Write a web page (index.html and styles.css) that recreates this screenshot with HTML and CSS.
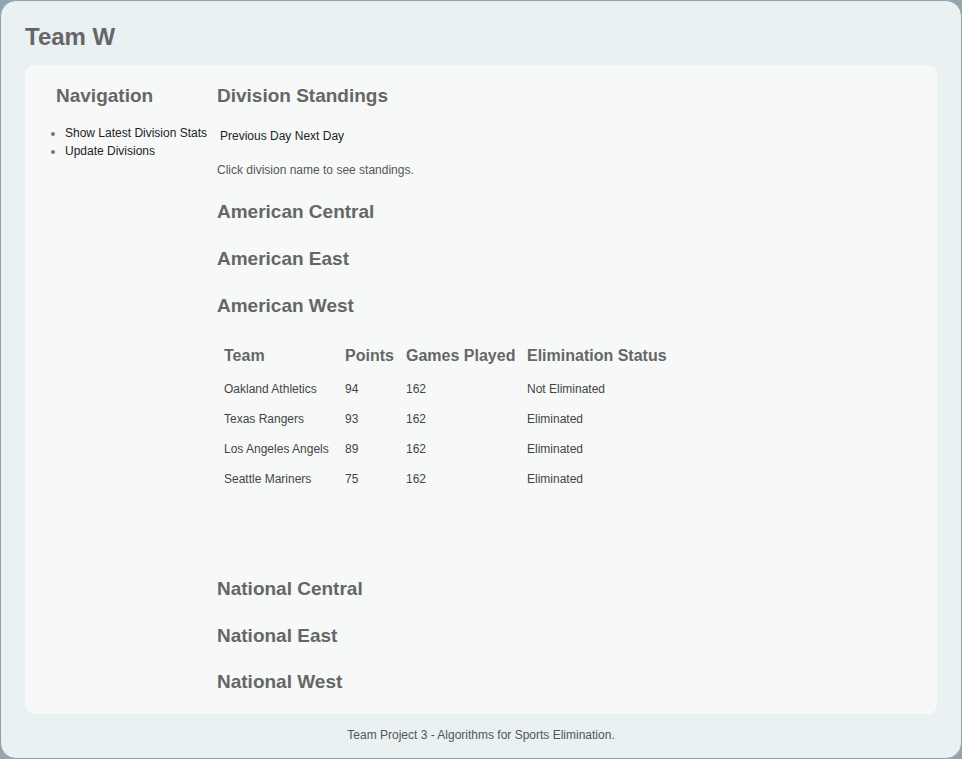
FILE: index.html
```html
<!DOCTYPE html>
<html>
<head>
<meta charset="utf-8">
<title>Team W</title>
<link rel="stylesheet" href="styles.css">
</head>
<body>
<div class="wrapper">
  <h1 class="site-title">Team W</h1>
  <div class="panel">
    <div class="nav">
      <h2 class="col-title nav-title">Navigation</h2>
      <ul class="nav-list">
        <li><a href="#">Show Latest Division Stats</a></li>
        <li><a href="#">Update Divisions</a></li>
      </ul>
    </div>
    <div class="main">
      <h2 class="col-title">Division Standings</h2>
      <div class="day-links"><a href="#">Previous Day</a> <a href="#">Next Day</a></div>
      <p class="hint">Click division name to see standings.</p>
      <h3 class="division">American Central</h3>
      <h3 class="division">American East</h3>
      <h3 class="division">American West</h3>
      <table class="standings">
        <thead>
          <tr><th class="c-team">Team</th><th class="c-pts">Points</th><th class="c-gp">Games Played</th><th class="c-st">Elimination Status</th></tr>
        </thead>
        <tbody>
          <tr><td>Oakland Athletics</td><td>94</td><td>162</td><td>Not Eliminated</td></tr>
          <tr><td>Texas Rangers</td><td>93</td><td>162</td><td>Eliminated</td></tr>
          <tr><td>Los Angeles Angels</td><td>89</td><td>162</td><td>Eliminated</td></tr>
          <tr><td>Seattle Mariners</td><td>75</td><td>162</td><td>Eliminated</td></tr>
        </tbody>
      </table>
      <h3 class="division national-first">National Central</h3>
      <h3 class="division">National East</h3>
      <h3 class="division">National West</h3>
    </div>
  </div>
  <div class="footer">Team Project 3 - Algorithms for Sports Elimination.</div>
</div>
</body>
</html>
```

FILE: styles.css
```css
html, body {
  margin: 0;
  padding: 0;
}
body {
  background: #93a5ad;
  font-family: "Liberation Sans", Arial, Helvetica, sans-serif;
  color: #555;
}
.wrapper {
  box-sizing: border-box;
  width: 962px;
  height: 759px;
  background: #e9f1f3;
  border: 1px solid #8fa2ab;
  border-radius: 16px;
  padding: 0 24px;
  display: flex;
  flex-direction: column;
}
.site-title {
  margin: 22px 0 0 0;
  height: 42px;
  font-size: 24px;
  line-height: 28px;
  font-weight: bold;
  color: #666;
}
.panel {
  background: #f7f9f9;
  border-radius: 9px;
  height: 649px;
  display: flex;
}
.nav {
  width: 192px;
  flex: none;
}
.col-title {
  margin: 19px 0 0 0;
  font-size: 19px;
  line-height: 24px;
  font-weight: bold;
  color: #666;
}
.nav-title {
  margin-left: 31px;
}
.nav-list {
  margin: 16px 0 0 0;
  padding-left: 40px;
  font-size: 12px;
  line-height: 18px;
  color: #777;
}
.nav-list a, .day-links a {
  color: #222;
  text-decoration: none;
}
.main {
  flex: 1;
}
.day-links {
  margin: 21px 0 0 3px;
  font-size: 12px;
  line-height: 14px;
}
.hint {
  margin: 20px 0 0 0;
  font-size: 12px;
  line-height: 14px;
  color: #555;
}
.division {
  margin: 22px 0 0 0;
  font-size: 19px;
  line-height: 26px;
  font-weight: bold;
  color: #666;
}
.division + .division {
  margin-top: 21px;
}
.standings {
  margin: 22px 0 0 7px;
  border-collapse: collapse;
}
.standings th, .standings td {
  padding: 0;
  text-align: left;
  vertical-align: middle;
}
.standings th {
  font-size: 16px;
  font-weight: bold;
  color: #666;
  height: 30px;
}
.standings td {
  font-size: 12px;
  color: #444;
  height: 30px;
}
.standings tbody tr:first-child td {
  padding-top: 3px;
}
.c-team { width: 121px; }
.c-pts { width: 61px; }
.c-gp { width: 121px; }
.national-first {
  margin-top: 82px;
}
.standings + .national-first {
  margin-top: 82px;
}
.national-first + .division + .division {
  margin-top: 20px;
}
.footer {
  text-align: center;
  font-size: 12px;
  line-height: 14px;
  color: #555;
  margin-top: 14px;
}
```
